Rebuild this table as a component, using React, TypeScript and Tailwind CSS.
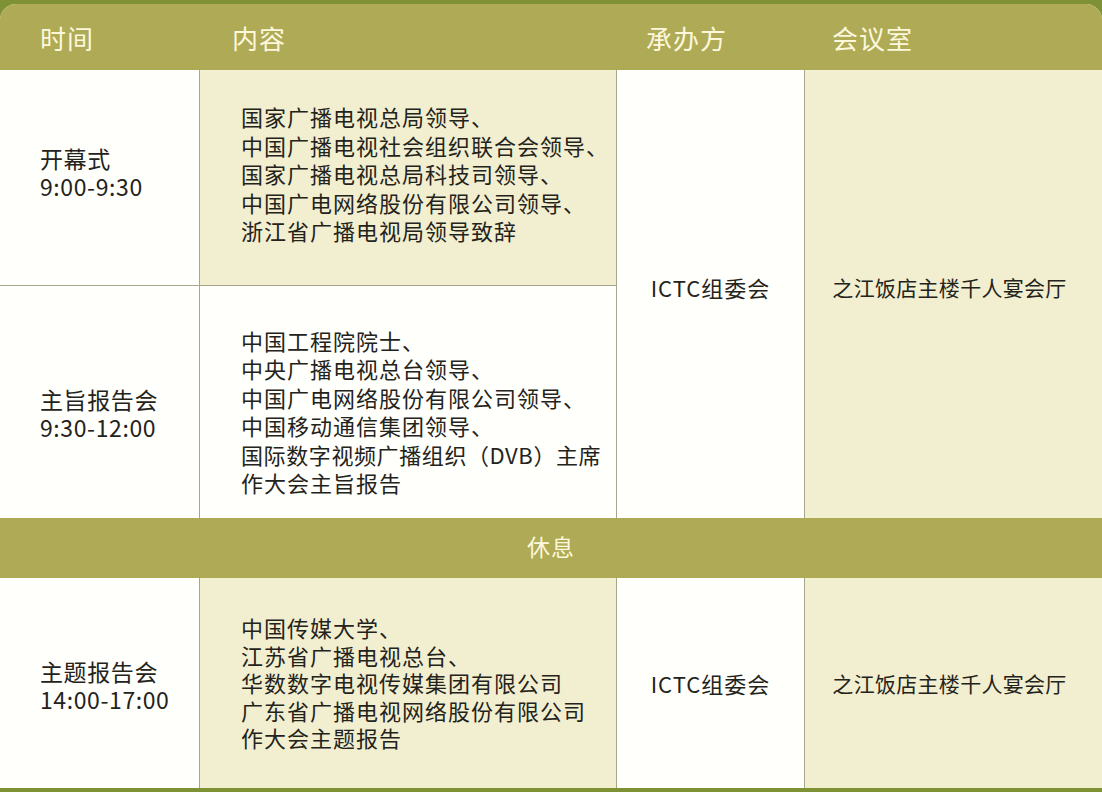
import React from 'react';

const font = { fontFamily: '"Noto Sans CJK SC", "Noto Sans", sans-serif' };

const cell = 'flex items-center text-[22px] leading-[28.5px] tracking-[1px] text-[#24231b]';
const roomCell = 'flex items-center justify-center text-[21px] leading-[28.5px] tracking-[0.3px] text-[#24231b]';
const timeCell = 'flex items-center text-[23px] leading-[28px] tracking-[0.6px] text-[#24231b]';

export default function App() {
  return (
    <div className="w-[1102px] h-[792px] bg-[#7e9135] pt-[4px] pb-[4px] overflow-hidden" style={font}>
      <div className="grid h-full grid-cols-[199px_417px_188px_1fr] grid-rows-[66px_216px_232px_60px_210px] overflow-hidden rounded-t-[16px] bg-[#fffffb]">
        {/* header */}
        <div className="col-span-4 grid grid-cols-[199px_417px_188px_1fr] items-center bg-[#aeaa56] text-[26px] tracking-[1px] text-[#fdf8dc]">
          <div className="pl-[40px]">时间</div>
          <div className="pl-[33px]">内容</div>
          <div className="pl-[30px]">承办方</div>
          <div className="pl-[28px]">会议室</div>
        </div>

        {/* 开幕式 */}
        <div className={`${timeCell} bg-[#fffffb] pl-[40px] pb-[12px] border-b border-[#a8a68c]`}>
          <div>
            <div>开幕式</div>
            <div>9:00-9:30</div>
          </div>
        </div>
        <div className={`${cell} bg-[#f2efd1] pl-[41px] pb-[8px] border-l border-b border-[#a8a68c]`}>
          <div>
            <div>国家广播电视总局领导、</div>
            <div>中国广播电视社会组织联合会领导、</div>
            <div>国家广播电视总局科技司领导、</div>
            <div>中国广电网络股份有限公司领导、</div>
            <div>浙江省广播电视局领导致辞</div>
          </div>
        </div>
        <div className={`${cell} row-span-2 justify-center pb-[14px] bg-[#fffffb] border-l border-[#a8a68c]`}>ICTC组委会</div>
        <div className={`${roomCell} row-span-2 pb-[14px] pr-[8px] bg-[#f2efd1] border-l border-[#a8a68c]`}>之江饭店主楼千人宴会厅</div>

        {/* 主旨报告会 */}
        <div className={`${timeCell} bg-[#fffffb] pl-[40px] pt-[22px]`}>
          <div>
            <div>主旨报告会</div>
            <div>9:30-12:00</div>
          </div>
        </div>
        <div className={`${cell} bg-[#fffffb] pl-[41px] pt-[18px] border-l border-[#a8a68c]`}>
          <div>
            <div>中国工程院院士、</div>
            <div>中央广播电视总台领导、</div>
            <div>中国广电网络股份有限公司领导、</div>
            <div>中国移动通信集团领导、</div>
            <div className="tracking-[0.6px]">国际数字视频广播组织（DVB）主席</div>
            <div>作大会主旨报告</div>
          </div>
        </div>

        {/* 休息 */}
        <div className="col-span-4 flex items-center justify-center pb-[4px] bg-[#aeaa56] text-[23px] tracking-[1px] text-[#fdf8dc]">休息</div>

        {/* 主题报告会 */}
        <div className={`${timeCell} bg-[#fffffb] pl-[40px] pt-[4px]`}>
          <div>
            <div>主题报告会</div>
            <div>14:00-17:00</div>
          </div>
        </div>
        <div className={`${cell} bg-[#f2efd1] pl-[41px] border-l border-[#a8a68c]`}>
          <div className="leading-[27.5px]">
            <div>中国传媒大学、</div>
            <div>江苏省广播电视总台、</div>
            <div>华数数字电视传媒集团有限公司</div>
            <div>广东省广播电视网络股份有限公司</div>
            <div>作大会主题报告</div>
          </div>
        </div>
        <div className={`${cell} justify-center bg-[#fffffb] border-l border-[#a8a68c]`}>ICTC组委会</div>
        <div className={`${roomCell} pr-[8px] bg-[#f2efd1] border-l border-[#a8a68c]`}>之江饭店主楼千人宴会厅</div>
      </div>
    </div>
  );
}
